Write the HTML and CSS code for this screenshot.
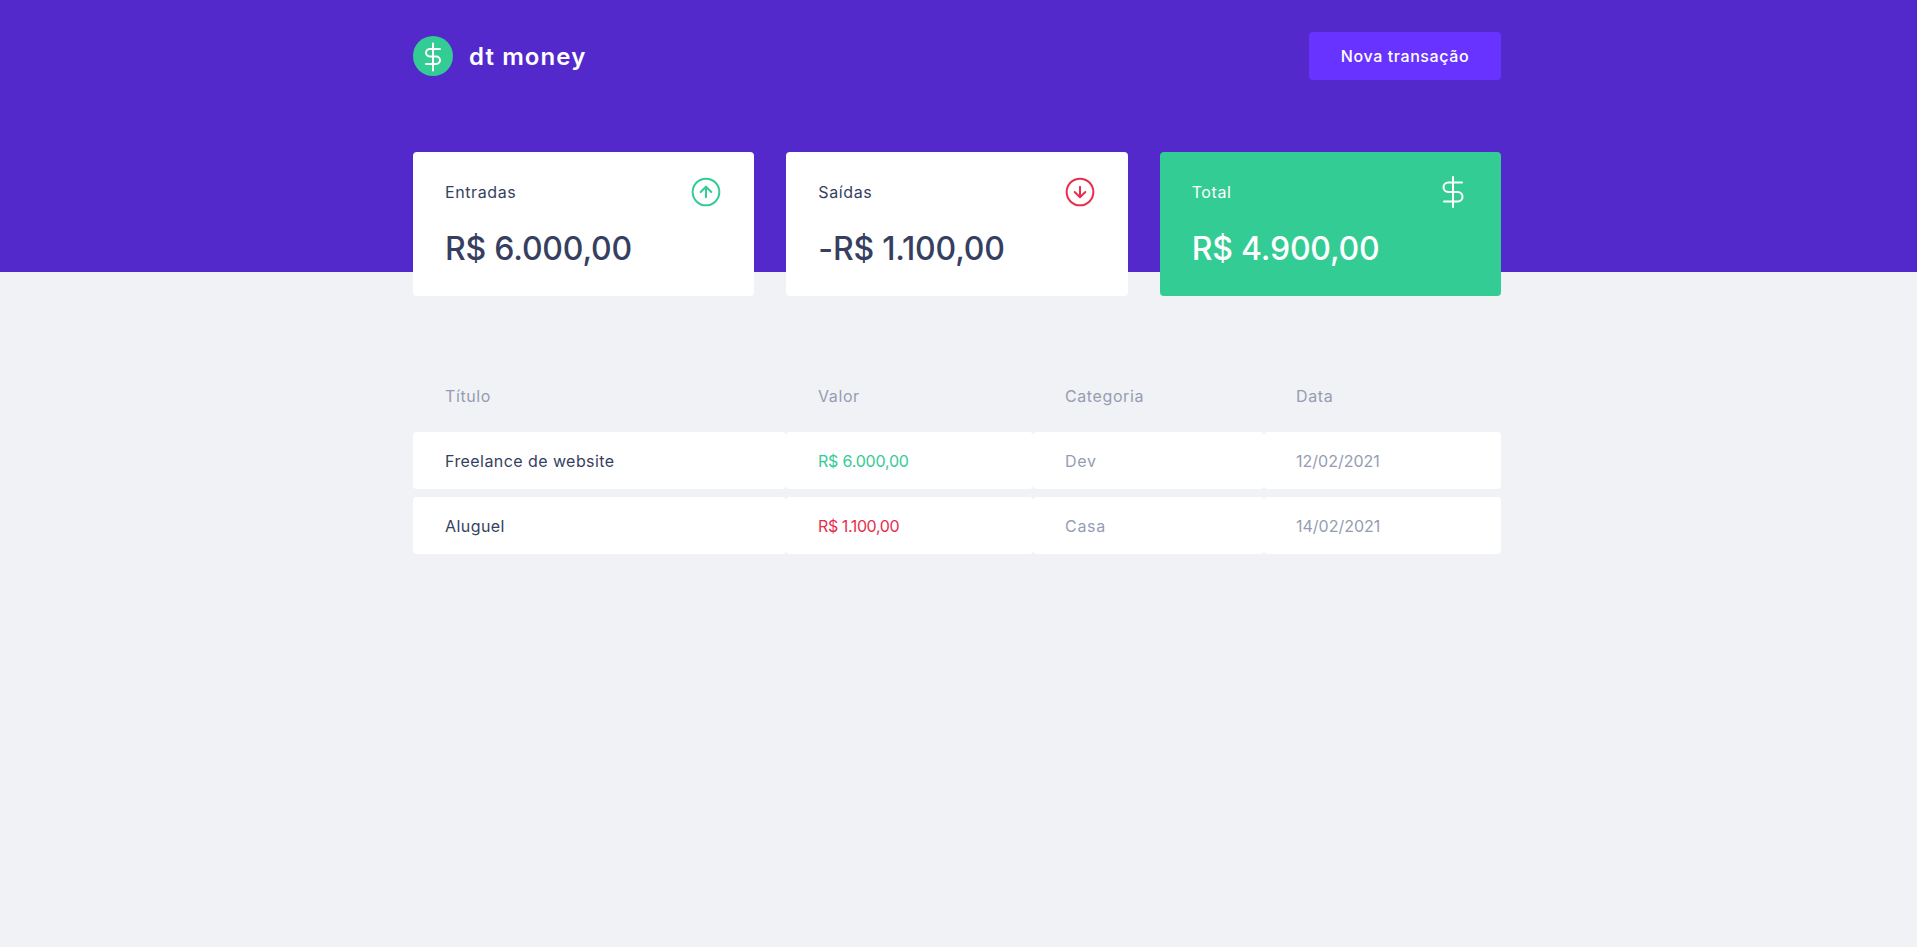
FILE: index.html
```html
<!DOCTYPE html>
<html lang="pt-BR">
<head>
    <meta charset="UTF-8">
    <meta name="viewport" content="width=device-width, initial-scale=1.0">
    <title>dt money</title>
    <link rel="stylesheet" href="styles.css">
</head>
<body>
    <header class="header">
        <div class="container header-content">
            <div class="logo">
                <svg class="logo-icon" viewBox="0 0 40 40">
                    <circle cx="20" cy="20" r="20" fill="#33cc95"/>
                    <path d="M20 7.5v27M27 13H16.75a3.75 3.75 0 0 0 0 7.5h6.5a3.75 3.75 0 0 1 0 7.5H13" fill="none" stroke="#fff" stroke-width="2" stroke-linecap="round" stroke-linejoin="round"/>
                </svg>
                <span class="logo-text">dt money</span>
            </div>
            <button class="new-button">Nova transação</button>
        </div>
    </header>

    <main class="container">
        <section class="summary">
            <div class="card">
                <div class="card-top">
                    <span class="card-label">Entradas</span>
                    <svg class="card-icon" viewBox="0 0 32 32" fill="none" stroke="#33cc95" stroke-width="2" stroke-linecap="round" stroke-linejoin="round">
                        <circle cx="16" cy="16" r="13.33"/>
                        <path d="M16 21.33V10.67M10.67 16 16 10.67 21.33 16"/>
                    </svg>
                </div>
                <strong class="card-value">R$ 6.000,00</strong>
            </div>
            <div class="card">
                <div class="card-top">
                    <span class="card-label">Saídas</span>
                    <svg class="card-icon" viewBox="0 0 32 32" fill="none" stroke="#e62e4d" stroke-width="2" stroke-linecap="round" stroke-linejoin="round">
                        <circle cx="16" cy="16" r="13.33"/>
                        <path d="M16 10.67V21.33M10.67 16 16 21.33 21.33 16"/>
                    </svg>
                </div>
                <strong class="card-value">-R$ 1.100,00</strong>
            </div>
            <div class="card card-total">
                <div class="card-top">
                    <span class="card-label">Total</span>
                    <svg class="card-icon" viewBox="0 0 32 32" fill="none" stroke="#fff" stroke-width="2" stroke-linecap="round" stroke-linejoin="round">
                        <path d="M16 1v30M25 6.5H11.25a4.75 4.75 0 0 0 0 9.5h9.5a4.75 4.75 0 0 1 0 9.5H7"/>
                    </svg>
                </div>
                <strong class="card-value">R$ 4.900,00</strong>
            </div>
        </section>

        <table class="transactions">
            <colgroup>
                <col class="col-title">
                <col class="col-value">
                <col class="col-category">
                <col class="col-date">
            </colgroup>
            <thead>
                <tr>
                    <th>Título</th>
                    <th>Valor</th>
                    <th>Categoria</th>
                    <th>Data</th>
                </tr>
            </thead>
            <tbody>
                <tr>
                    <td class="title-cell">Freelance de website</td>
                    <td class="income">R$ 6.000,00</td>
                    <td class="category-cell">Dev</td>
                    <td>12/02/2021</td>
                </tr>
                <tr>
                    <td class="title-cell">Aluguel</td>
                    <td class="outcome">R$ 1.100,00</td>
                    <td class="category-cell">Casa</td>
                    <td>14/02/2021</td>
                </tr>
            </tbody>
        </table>
    </main>
</body>
</html>
```

FILE: styles.css
```css
* {
    margin: 0;
    padding: 0;
    box-sizing: border-box;
}

body {
    font-family: Inter, "Noto Sans", sans-serif;
    background-color: #f0f2f5;
    color: #969cb3;
    min-height: 100vh;
}

.container {
    width: 1088px;
    margin-left: 413px;
}

.header {
    background-color: #5429cc;
    height: 272px;
}

.header-content {
    display: flex;
    justify-content: space-between;
    align-items: flex-start;
    padding-top: 32px;
}

.logo {
    display: flex;
    align-items: center;
    gap: 16px;
    height: 48px;
}

.logo-icon {
    width: 40px;
    height: 40px;
}

.logo-text {
    color: #fff;
    font-size: 24px;
    font-weight: 600;
    letter-spacing: 1.1px;
}

.new-button {
    width: 192px;
    height: 48px;
    background-color: #6933ff;
    color: #fff;
    font-family: inherit;
    font-size: 16px;
    font-weight: 500;
    letter-spacing: 0.6px;
    border: none;
    border-radius: 4px;
    cursor: pointer;
}

.summary {
    display: grid;
    grid-template-columns: repeat(3, 1fr);
    gap: 32px;
    margin-top: -120px;
}

.card {
    height: 144px;
    padding: 24px 32px;
    background-color: #fff;
    color: #363f5f;
    border-radius: 4px;
}

.card-total {
    background-color: #33cc95;
    color: #fff;
}

.card-top {
    display: flex;
    justify-content: space-between;
    align-items: center;
}

.card-label {
    font-size: 16px;
    letter-spacing: 0.6px;
}

.card-icon {
    width: 32px;
    height: 32px;
}

.card-value {
    display: block;
    margin-top: 17px;
    font-size: 32px;
    font-weight: 500;
    line-height: 48px;
    letter-spacing: -0.2px;
}

.transactions {
    width: 100%;
    margin-top: 64px;
    border-spacing: 0 8px;
    table-layout: fixed;
}

.col-title {
    width: 373px;
}

.col-value {
    width: 247px;
}

.col-category {
    width: 231px;
}

.col-date {
    width: 237px;
}

.transactions th {
    padding: 16px 32px;
    font-weight: 400;
    font-size: 16px;
    line-height: 24px;
    letter-spacing: 0.6px;
    text-align: left;
}

.transactions td {
    height: 57px;
    padding: 0 32px;
    background-color: #fff;
    font-size: 16px;
    border-radius: 4px;
}

.transactions .title-cell {
    color: #363f5f;
    letter-spacing: 0.43px;
}

.transactions .category-cell {
    letter-spacing: 0.7px;
}

.transactions .income {
    color: #33cc95;
    letter-spacing: -0.2px;
}

.transactions .outcome {
    color: #e62e4d;
    letter-spacing: -0.4px;
}
```
